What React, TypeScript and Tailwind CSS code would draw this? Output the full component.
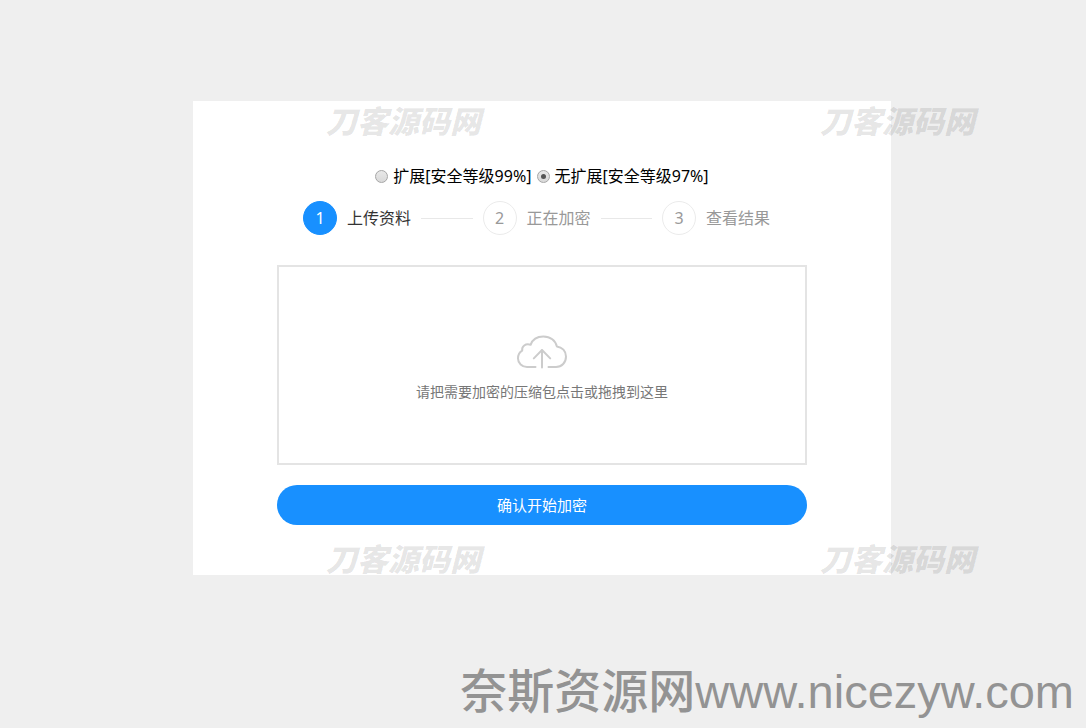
import { useState } from 'react';
import clsx from 'clsx';

const steps = ['上传资料', '正在加密', '查看结果'];

const levels = [
  { value: 'ext', label: '扩展[安全等级99%]' },
  { value: 'no-ext', label: '无扩展[安全等级97%]' },
];

function CloudUploadIcon() {
  return (
    <svg
      width="50"
      height="34"
      viewBox="0 0 50 34"
      fill="none"
      stroke="#cccccc"
      strokeWidth="2"
      strokeLinecap="round"
      strokeLinejoin="round"
      aria-hidden="true"
    >
      <path d="M18.5 32H10C5 32 1 28.2 1 23.4C1 19.6 3 16.8 5.2 15.6C4.6 11.4 8.4 8.2 13.6 9.8C15.4 4.6 20.4 1.5 26.4 1.5C33.4 1.5 38.6 5.6 39.8 11.4C45.2 12 49 16 49 21.4C49 27.6 44.8 32 39 32H31.5" />
      <path d="M25 32.5V15M16.8 23.4L25 15L33.2 23.4" />
    </svg>
  );
}

// Site mark repeated over the corners of the card
function Watermark({ className }: { className: string }) {
  return (
    <span
      aria-hidden="true"
      className={clsx(
        'pointer-events-none absolute select-none whitespace-nowrap text-[31px] font-black italic leading-[40px] text-black/11',
        className,
      )}
    >
      刀客源码网
    </span>
  );
}

function Steps({ current }: { current: number }) {
  return (
    <ol className="mt-[10px] flex items-center pl-[26px] pr-[37px]">
      {steps.map((title, i) => (
        <li key={title} className={clsx('flex items-center', i > 0 && 'flex-1')}>
          {i > 0 && <span className="mx-[10px] h-px flex-1 bg-[#e8e8e8]" />}
          <span
            className={clsx(
              'flex size-[34px] shrink-0 items-center justify-center rounded-full border',
              i === current
                ? 'border-[#1890ff] bg-[#1890ff] text-white'
                : 'border-[#ebebeb] bg-white text-[#999999]',
            )}
          >
            {i + 1}
          </span>
          <span
            className={clsx(
              'ml-[10px] whitespace-nowrap',
              i === current ? 'text-[#333333]' : 'text-[#999999]',
            )}
          >
            {title}
          </span>
        </li>
      ))}
    </ol>
  );
}

export default function App() {
  const [level, setLevel] = useState('no-ext');

  return (
    <div className="flex min-h-screen flex-col bg-[#efefef] font-['Noto_Sans','Noto_Sans_CJK_SC',sans-serif] text-base text-black">
      <main className="pr-0.5 pt-[101px]">
        <form
          className="relative mx-auto w-full max-w-[698px] bg-white px-[84px] pb-[50px] pt-[60px]"
          onSubmit={(e) => e.preventDefault()}
        >
          <div className="flex justify-center gap-[5px] leading-[30px]">
            {levels.map((item) => (
              <label key={item.value} className="flex items-center gap-[5px] whitespace-nowrap">
                <input
                  type="radio"
                  name="level"
                  value={item.value}
                  checked={level === item.value}
                  onChange={() => setLevel(item.value)}
                  className="flex size-[13px] appearance-none items-center justify-center rounded-full border border-[#a6a6a6] bg-linear-to-b from-[#e8e8e8] to-[#d9d9d9] checked:before:size-[5px] checked:before:rounded-full checked:before:bg-[#555555] checked:before:content-['']"
                />
                {item.label}
              </label>
            ))}
          </div>

          <Steps current={0} />

          <label className="mt-[30px] flex h-[200px] cursor-pointer flex-col items-center justify-center gap-[13px] border-2 border-[#e4e4e4] pt-[7px] text-sm text-[#777777]">
            <CloudUploadIcon />
            请把需要加密的压缩包点击或拖拽到这里
            <input type="file" className="sr-only" />
          </label>

          <button
            type="submit"
            className="mt-[20px] h-[40px] w-full cursor-pointer rounded-full bg-[#1890ff] text-[15px] text-white"
          >
            确认开始加密
          </button>

          <Watermark className="left-[133px] top-0" />
          <Watermark className="left-[627px] top-0" />
          <Watermark className="bottom-[-4px] left-[133px]" />
          <Watermark className="bottom-[-4px] left-[627px]" />
        </form>
      </main>

      <footer className="mt-auto whitespace-nowrap pb-[4px] pr-[12px] text-right font-['Liberation_Sans','Noto_Sans_CJK_SC',sans-serif] text-[47px] font-medium leading-[64px] text-[#939393]">
        奈斯资源网www.nicezyw.com
      </footer>
    </div>
  );
}
